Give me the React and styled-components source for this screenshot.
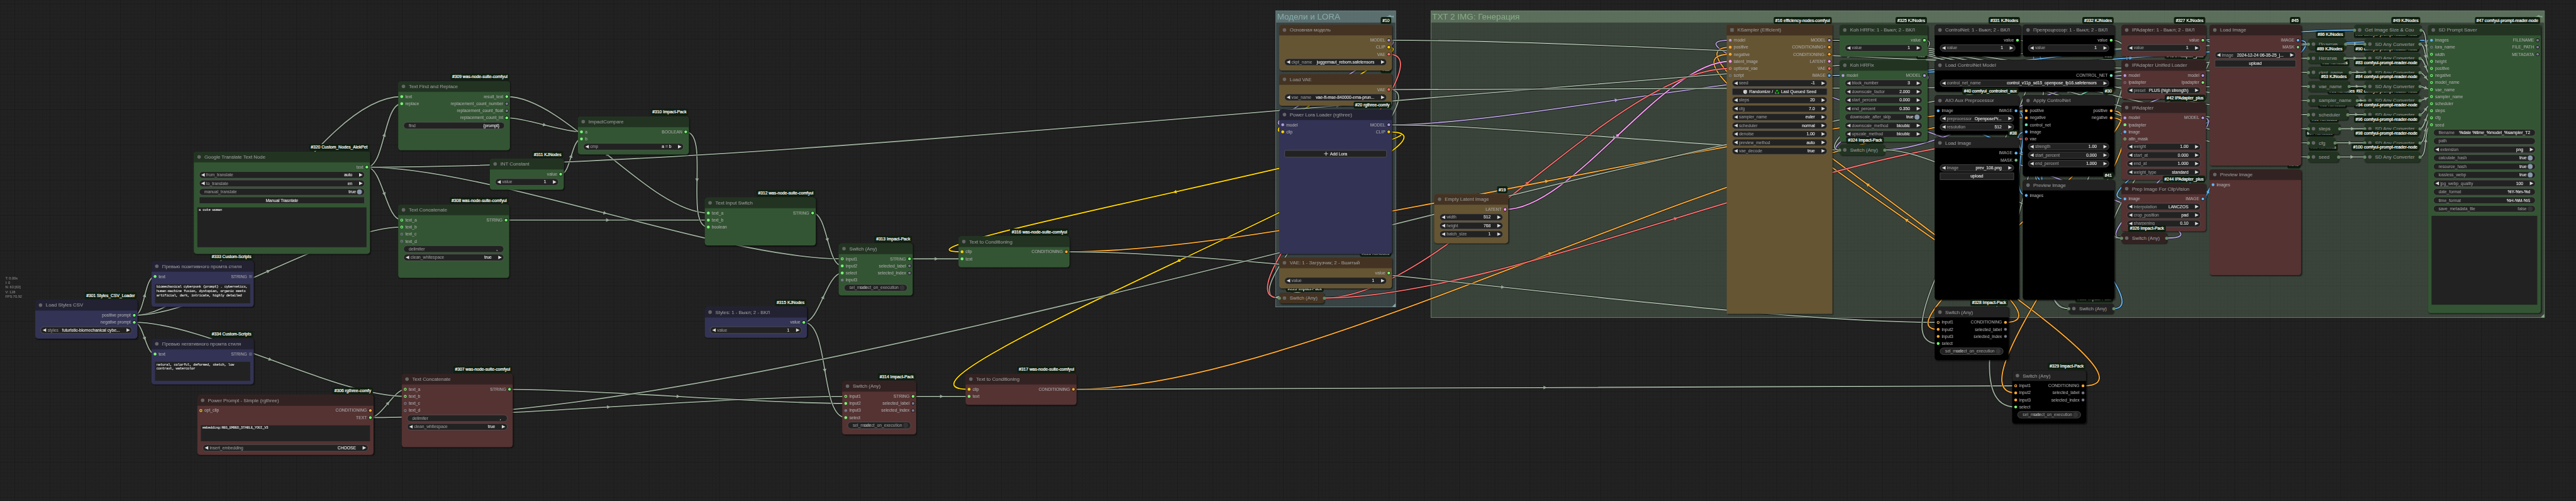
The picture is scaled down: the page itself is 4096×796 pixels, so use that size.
import React from 'react';
import styled, { createGlobalStyle, css } from 'styled-components';

const GlobalStyle = createGlobalStyle`
  html, body { margin: 0; padding: 0; background: #222; overflow: hidden; }
  * { box-sizing: border-box; }
`;

const GREY = '#778';
const LINK = '#9a9';
const ON = '#7f7';
const MODEL = '#b39ddb';
const CLIP = '#ffd500';
const VAE = '#ff6e6e';
const COND = '#ffa931';
const IMAGE = '#64b5f6';
const LATENT = '#ff9cf9';
const CNET = '#6ee7b7';
const MASK = '#81c784';

const palettes = {
  green: { title: '#232', body: '#353' },
  red: { title: '#322', body: '#533' },
  blue: { title: '#223', body: '#335' },
  gold: { title: '#432', body: '#653' },
  black: { title: '#222', body: '#000' },
};

/* ---------- canvas ---------- */

const Viewport = styled.div`
  width: 4096px;
  height: 796px;
  overflow: hidden;
  background: #222;
`;

const Canvas = styled.main`
  position: relative;
  width: 7310px;
  height: 1421px;
  transform: scale(0.56033);
  transform-origin: 0 0;
  font-family: 'Liberation Sans', Arial, sans-serif;
  font-size: 12px;
  line-height: 20px;
  white-space: pre;
  -webkit-text-stroke: 0.15px;
`;

const Layer = styled.svg`
  position: absolute;
  left: 0;
  top: 0;
  width: 7310px;
  height: 1421px;
  display: block;
`;

const Stats = styled.div`
  position: absolute;
  left: 15px;
  top: 782px;
  color: #888;
  font-size: 10px;
  line-height: 13px;
`;

/* ---------- groups ---------- */

const GroupBox = styled.section`
  position: absolute;
  left: ${(p) => p.$x}px;
  top: ${(p) => p.$y}px;
  width: ${(p) => p.$w}px;
  height: ${(p) => p.$h}px;
  border: 1px solid rgb(${(p) => p.$rgb});
  background: rgba(${(p) => p.$rgb}, 0.25);
`;

const GroupHeader = styled.header`
  display: flex;
  justify-content: space-between;
  align-items: center;
  height: 33px;
  padding: 0 5px 2px 3px;
  background: rgba(${(p) => p.$rgb}, 0.43);
  color: rgb(${(p) => p.$rgb});
  font-size: 24px;
  line-height: 32px;
`;

const GroupCorner = styled.i`
  position: absolute;
  right: 0;
  bottom: 0;
  border: 5px solid transparent;
  border-right-color: rgb(${(p) => p.$rgb});
  border-bottom-color: rgb(${(p) => p.$rgb});
`;

/* ---------- nodes ---------- */

const NodeBox = styled.article`
  position: absolute;
  left: ${(p) => p.$x}px;
  top: ${(p) => p.$y - 30}px;
  width: ${(p) => p.$w}px;
  height: ${(p) => p.$h + 30}px;
  border-radius: ${(p) => (p.$square ? 0 : 8)}px;
  background: ${(p) => (p.$folded ? palettes[p.$tone].title : palettes[p.$tone].body)};
  box-shadow: 2px 2px 3px rgba(0, 0, 0, 0.5);
`;

const TitleBar = styled.header`
  display: flex;
  align-items: center;
  height: 30px;
  padding-left: 10px;
  gap: 10px;
  border-radius: ${(p) => (p.$square ? '0' : p.$folded ? '8px' : '8px 8px 0 0')};
  background: ${(p) => palettes[p.$tone].title};
  ${(p) => !p.$folded && css`box-shadow: 0 1px 0 rgba(0, 0, 0, 0.2);`}
  color: #999;
  font-size: 14px;
`;

const TitleDot = styled.i`
  width: 10px;
  height: 10px;
  background: #666;
  border-radius: ${(p) => (p.$square ? 0 : '50%')};
`;

const Badge = styled.span`
  position: absolute;
  right: 2px;
  top: -22px;
  height: 20px;
  padding: 0 5px;
  border-radius: 5px;
  background: #0f1f0f;
  color: #fff;
  -webkit-text-stroke: 0.4px #fff;
`;

const FoldPin = styled.i`
  position: absolute;
  top: 10.5px;
  ${(p) => p.$side}: -4.5px;
  width: 9px;
  height: 9px;
  border-radius: 50%;
  background: #686;
`;

const Slots = styled.div`
  display: flex;
  justify-content: space-between;
  padding: 4px 5px 2px 6px;
  color: #aaa;
`;

const SlotColumn = styled.div`
  display: flex;
  flex-direction: column;
  align-items: ${(p) => (p.$out ? 'flex-end' : 'flex-start')};
`;

const Slot = styled.div`
  display: flex;
  align-items: center;
  height: 20px;
  gap: 6px;
`;

const Pin = styled.i`
  width: 8px;
  height: 8px;
  border-radius: 50%;
  background: ${(p) => p.$c};
  ${(p) => p.$ring && css`background: transparent; border: 2.6px solid ${p.$c};`}
  ${(p) => p.$out && css`box-shadow: 0 0 0 1px #000;`}
`;

const ListPin = styled.i`
  display: grid;
  grid-template-columns: repeat(3, 2px);
  gap: 1px;
  width: 8px;

  b {
    height: 2px;
    background: #889;
  }
`;

const Pill = styled.div`
  display: flex;
  align-items: center;
  height: 20px;
  margin: ${(p) => p.$mt || 0}px 15px 4px;
  padding: 0 ${(p) => (p.$kind === 'toggle' ? 6.8 : p.$kind === 'text' ? 14 : 5)}px 0 ${(p) => (p.$kind === 'step' ? 5 : 14)}px;
  border: 1px solid #666;
  border-radius: 10px;
  background: #222;
  line-height: 18px;
`;

const Label = styled.span`
  flex: 0 1 auto;
  min-width: 0;
  color: #999;
  ${(p) => p.$step && css`margin-left: 4px;`}
`;

const Value = styled.span`
  flex: none;
  margin-left: auto;
  color: ${(p) => (p.$off ? '#999' : '#ddd')};
  -webkit-text-stroke: ${(p) => (p.$off ? 0.15 : 0.35)}px;
  margin-right: ${(p) => (p.$kind === 'step' ? 19 : p.$kind === 'toggle' ? 2.8 : 0)}px;
`;

const Arrow = styled.i`
  flex: none;
  border: 5px solid transparent;
  ${(p) => (p.$right ? css`border-right: 0; border-left: 10px solid #ddd;` : css`border-left: 0; border-right: 10px solid #ddd;`)}
`;

const Knob = styled.i`
  flex: none;
  width: 14.4px;
  height: 14.4px;
  border-radius: 50%;
  background: ${(p) => (p.$off ? '#333' : '#89a')};
`;

const Button = styled.div`
  display: flex;
  justify-content: center;
  align-items: center;
  gap: 5px;
  height: 20px;
  margin: ${(p) => p.$mt || 0}px 15px 4px;
  border: 1px solid #666;
  border-radius: ${(p) => p.$r || 0}px;
  background: #222;
  color: #ddd;
  line-height: 18px;
  -webkit-text-stroke: 0.35px;
`;

const TextArea = styled.div`
  height: ${(p) => p.$h}px;
  margin: 10px 10px 0;
  padding: 2px 4px;
  background: #222;
  color: #ddd;
  font: 10px/12px 'Liberation Mono', monospace;
  letter-spacing: -0.5px;
  -webkit-text-stroke: 0.3px;
  overflow: hidden;
`;

/* ---------- small drawings ---------- */

const PushPin = ({ rgb }) => (
  <svg width="20" height="12" viewBox="0 0 20 12">
    <g fill={`rgb(${rgb})`}>
      <rect x="0" y="5.3" width="6" height="1.4" />
      <path d="M4.5 5.3 Q6 2 8.5 2 Q11.5 2 13 4.6 L17.6 5 L18 3 H19.6 V9 H18 L17.6 7 H4.5 Z" />
    </g>
  </svg>
);

const Dice = () => (
  <svg width="13" height="13" viewBox="0 0 13 13">
    <path d="M6.5 0.5 L12 3 L11.3 9.6 L6.5 12.6 L1.7 9.6 L1 3 Z" fill="#e8e8e8" />
    <path d="M6.5 5.6 L12 3 L11.3 9.6 L6.5 12.6 Z" fill="#bdbdbd" />
    <g fill="#444">
      <circle cx="6.5" cy="3" r="0.9" />
      <circle cx="3.2" cy="6" r="0.7" />
      <circle cx="4.8" cy="9.2" r="0.7" />
      <circle cx="8.3" cy="8.6" r="0.7" />
      <circle cx="10" cy="6" r="0.7" />
    </g>
  </svg>
);

const Recycle = () => (
  <svg width="13" height="13" viewBox="0 0 13 13" fill="none" stroke="#16c016" strokeWidth="2.6">
    <path d="M4 5.5 L6 2 H7.5 L9.2 5" />
    <path d="M10 6.8 L11.4 9.6 L10.6 11 H7.4" />
    <path d="M5.4 11 H2.4 L1.6 9.6 L3 7" />
  </svg>
);

/* ---------- node data ---------- */

const step = (label, value, mt) => ({ kind: 'step', label, value, mt });
const text = (label, value) => ({ kind: 'text', label, value });
const toggle = (label, value, off) => ({ kind: 'toggle', label, value, off });
const button = (value, extra = {}) => ({ kind: 'button', value, ...extra });
const area = (value, h) => ({ kind: 'area', value, h });
const ring = (name, c = ON) => [name, c, 'ring'];

const NODE = (id, title, tone, x, y, w, h, badge, inputs = [], outputs = [], widgets = [], square = false) => ({
  id, title, tone, x, y, w, h, badge, inputs, outputs, widgets, square,
});
const FOLD = (id, title, tone, x, y, w, badge) => ({ id, title, tone, x, y, w, h: 0, badge, folded: true });

const concatIn = [ring('text_a'), ring('text_b'), ring('text_c', GREY), ring('text_d', GREY)];
const concatWidgets = [text('delimiter', ', '), step('clean_whitespace', 'true')];
const switchOut = (name, c) => [[name, c], ['selected_label', GREY], ['selected_index', GREY]];
const selMode = [toggle('sel_mode', 'select_on_execution', true)];
const valueOut = [['value', ON]];
const valueOne = [step('value', '1')];
const reader = 'comfyui-prompt-reader-node';

const nodes = [
  NODE('301', 'Load Styles CSV', 'blue', 100, 880, 290, 80, '#301 Styles_CSV_Loader', [],
    [['positive prompt', ON], ['negative prompt', ON]], [step('styles', 'futuristic-biomechanical cybe...')]),
  NODE('333', 'Превью позитивного промта стиля', 'blue', 430, 770, 290, 100, '#333 Custom-Scripts',
    [['text', ON]], [['STRING', GREY, 'list']],
    [area('biomechanical cyberpunk {prompt} . cybernetics,\nhuman-machine fusion, dystopian, organic meets\nartificial, dark, intricate, highly detailed', 54)]),
  NODE('334', 'Превью негативного промта стиля', 'blue', 430, 990, 290, 100, '#334 Custom-Scripts',
    [['text', ON]], [['STRING', GREY, 'list']],
    [area('natural, colorful, deformed, sketch, low\ncontrast, watercolor', 54)]),
  NODE('306', 'Power Prompt - Simple (rgthree)', 'red', 560, 1150, 500, 140, '#306 rgthree-comfy',
    [ring('opt_clip', CLIP)], [['CONDITIONING', COND], ['TEXT', ON]],
    [area('embedding:NEG_EMBED_STABLE_YOGI_V3', 45), step('insert_embedding', 'CHOOSE', 9)]),
  NODE('320', 'Google Translate Text Node', 'green', 550, 460, 500, 260, '#320 Custom_Nodes_AlekPet', [],
    [['text', ON]],
    [step('from_translate', 'auto'), step('to_translate', 'en'), toggle('manual_translate', 'true'),
      button('Manual Trasnlate'), area('a cute woman', 113)]),
  NODE('309', 'Text Find and Replace', 'green', 1130, 260, 317, 166, '#309 was-node-suite-comfyui',
    [['text', ON], ['replace', ON]],
    [['result_text', ON], ['replacement_count_number', GREY], ['replacement_count_float', GREY], ['replacement_count_int', ON]],
    [text('find', '{prompt}')]),
  NODE('308', 'Text Concatenate', 'green', 1130, 610, 315, 178, '#308 was-node-suite-comfyui', concatIn, [['STRING', ON]], concatWidgets),
  NODE('307', 'Text Concatenate', 'red', 1140, 1090, 315, 178, '#307 was-node-suite-comfyui', concatIn, [['STRING', ON]], concatWidgets),
  NODE('311', 'INT Constant', 'green', 1390, 480, 210, 58, '#311 KJNodes', [], valueOut, valueOne),
  NODE('310', 'ImpactCompare', 'green', 1640, 360, 315, 78, '#310 Impact-Pack', [['a', ON], ['b', ON]], [['BOOLEAN', ON]], [step('cmp', 'a = b')]),
  NODE('312', 'Text Input Switch', 'green', 2000, 590, 315, 106, '#312 was-node-suite-comfyui',
    [['text_a', ON], ['text_b', ON], ['boolean', ON]], [['STRING', ON]]),
  NODE('313', 'Switch (Any)', 'green', 2380, 720, 210, 118, '#313 Impact-Pack',
    [ring('input1'), ['input2', ON], ['select', ON], ['input3', GREY]], switchOut('STRING', ON), selMode),
  NODE('315', 'Styles: 1 - Выкл; 2 - ВКЛ', 'blue', 2000, 900, 290, 58, '#315 KJNodes', [], valueOut, valueOne),
  NODE('316', 'Text to Conditioning', 'green', 2720, 700, 315, 58, '#316 was-node-suite-comfyui', [['clip', CLIP], ['text', ON]], [['CONDITIONING', COND]]),
  NODE('314', 'Switch (Any)', 'red', 2390, 1110, 210, 122, '#314 Impact-Pack',
    [ring('input1'), ['input2', ON], ['input3', GREY], ['select', ON]], switchOut('STRING', ON), selMode),
  NODE('317', 'Text to Conditioning', 'red', 2740, 1090, 315, 58, '#317 was-node-suite-comfyui', [['clip', CLIP], ['text', ON]], [['CONDITIONING', COND]]),

  FOLD('225', 'Switch (Any)', 'gold', 3630, 860, 128, '#225 Impact-Pack'),
  NODE('226', 'VAE: 1 - Загрузчик; 2 - Вшитый', 'gold', 3630, 760, 320, 58, '#226 KJNodes', [], valueOut, valueOne),
  NODE('12', 'Load VAE', 'gold', 3630, 240, 320, 60, '#12', [], [['VAE', VAE]], [step('vae_name', 'vae-ft-mse-840000-ema-prun...')]),
  NODE('10', 'Основная модель', 'gold', 3630, 100, 320, 100, '#10', [],
    [['MODEL', MODEL], ['CLIP', CLIP], ['VAE', VAE]], [step('ckpt_name', 'juggernaut_reborn.safetensors')]),
  NODE('20', 'Power Lora Loader (rgthree)', 'blue', 3630, 340, 320, 380, '#20 rgthree-comfy',
    [['model', MODEL], ['clip', CLIP]], [['MODEL', MODEL], ['CLIP', CLIP]], [button('Add Lora', { mt: 40, r: 4, plus: true })]),
  NODE('19', 'Empty Latent Image', 'gold', 4070, 580, 210, 110, '#19', [], [['LATENT', LATENT]],
    [step('width', '512'), step('height', '768'), step('batch_size', '1')]),
  NODE('16', 'KSampler (Efficient)', 'gold', 4900, 100, 300, 790, '#16 efficiency-nodes-comfyui',
    [['model', MODEL], ['positive', COND], ['negative', COND], ['latent_image', LATENT], ring('optional_vae', VAE), ring('script', GREY)],
    [['MODEL', MODEL], ['CONDITIONING+', COND], ['CONDITIONING-', COND], ['LATENT', LATENT], ['VAE', VAE], ['IMAGE', IMAGE]],
    [step('seed', '-1'), button('seed', { seed: true }), step('steps', '20'), step('cfg', '7.0'), step('sampler_name', 'euler'),
      step('scheduler', 'normal'), step('denoise', '1.00'), step('preview_method', 'auto'), step('vae_decode', 'true')], true),
  NODE('22', 'Koh HRFix', 'green', 5220, 200, 250, 202, '#22', [['model', MODEL]], [['MODEL', MODEL]],
    [step('block_number', '3'), step('downscale_factor', '2.000'), step('start_percent', '0.000'), step('end_percent', '0.350'),
      toggle('downscale_after_skip', 'true'), step('downscale_method', 'bicubic'), step('upscale_method', 'bicubic')]),
  NODE('325', 'Koh HRFix: 1 - Выкл; 2 - ВКЛ', 'green', 5220, 100, 250, 60, '#325 KJNodes', [], valueOut, valueOne),
  FOLD('324', 'Switch (Any)', 'green', 5220, 440, 128, '#324 Impact-Pack'),

  NODE('31', 'Load ControlNet Model', 'black', 5490, 200, 510, 60, '#31', [], [['CONTROL_NET', CNET]],
    [step('control_net_name', 'control_v11p_sd15_openpose_fp16.safetensors')]),
  NODE('331', 'ControlNet: 1 - Выкл; 2 - ВКЛ', 'black', 5490, 100, 244, 60, '#331 KJNodes', [], valueOut, valueOne),
  NODE('332', 'Препроцессор: 1 - Выкл; 2 - ВКЛ', 'black', 5740, 100, 260, 60, '#332 KJNodes', [], valueOut, valueOne),
  NODE('40', 'AIO Aux Preprocessor', 'black', 5490, 300, 240, 82, '#40 comfyui_controlnet_aux', [['image', IMAGE]], [['IMAGE', IMAGE]],
    [step('preprocessor', 'OpenposePr...'), step('resolution', '512')]),
  NODE('30', 'Apply ControlNet', 'black', 5740, 300, 260, 200, '#30',
    [['positive', COND], ['negative', COND], ['control_net', CNET], ['image', IMAGE], ring('vae', VAE)],
    [['positive', COND], ['negative', COND]], [step('strength', '1.00'), step('start_percent', '0.000'), step('end_percent', '1.000')]),
  NODE('38', 'Load Image', 'black', 5490, 420, 240, 430, '#38', [], [['IMAGE', IMAGE], ['MASK', MASK]], [step('image', 'prev_108.png'), button('upload')]),
  FOLD('330', 'Switch (Any)', 'black', 5870, 890, 128, '#330 Impact-Pack'),
  NODE('41', 'Preview Image', 'black', 5740, 540, 260, 310, '#41', [['images', IMAGE]]),
  NODE('328', 'Switch (Any)', 'black', 5490, 900, 210, 121, '#328 Impact-Pack',
    [ring('input1', COND), ['input2', COND], ['input3', COND], ['select', ON]], switchOut('CONDITIONING', COND), selMode),
  NODE('329', 'Switch (Any)', 'black', 5710, 1080, 210, 121, '#329 Impact-Pack',
    [ring('input1', COND), ['input2', COND], ['input3', COND], ['select', ON]], switchOut('CONDITIONING', COND), selMode),

  NODE('43', 'IPAdapter Unified Loader', 'red', 6020, 200, 240, 80, '#43 IPAdapter_plus',
    [['model', MODEL], ring('ipadapter', GREY)], [['model', MODEL], ['ipadapter', ON]], [step('preset', 'PLUS (high strength)')]),
  NODE('327', 'IPAdapter: 1 - Выкл; 2 - ВКЛ', 'red', 6020, 100, 240, 60, '#327 KJNodes', [], valueOut, valueOne),
  NODE('42', 'IPAdapter', 'red', 6020, 320, 240, 190, '#42 IPAdapter_plus',
    [['model', MODEL], ['ipadapter', ON], ['image', IMAGE], ring('attn_mask', MASK)], [['MODEL', MODEL]],
    [step('weight', '1.00'), step('start_at', '0.000'), step('end_at', '1.000'), step('weight_type', 'standard')]),
  NODE('244', 'Prep Image For ClipVision', 'red', 6020, 550, 240, 106, '#244 IPAdapter_plus', [['image', IMAGE]], [['IMAGE', IMAGE]],
    [step('interpolation', 'LANCZOS'), step('crop_position', 'pad'), step('sharpening', '0.10')]),
  FOLD('326', 'Switch (Any)', 'red', 6020, 690, 128, '#326 Impact-Pack'),
  NODE('245', 'Preview Image', 'red', 6270, 510, 260, 270, '#245', [['images', IMAGE]]),
  NODE('45', 'Load Image', 'red', 6270, 100, 260, 370, '#45', [], [['IMAGE', IMAGE], ['MASK', MASK]],
    [step('image', '2024-12-24 06-35-25_j...'), button('upload')]),

  FOLD('99', 'seed', 'green', 6550, 460, 86, '#99 KJNodes'),
  FOLD('97', 'cfg', 'green', 6550, 420, 76, '#97 KJNodes'),
  FOLD('95', 'steps', 'green', 6550, 380, 89, '#95 KJNodes'),
  FOLD('93', 'scheduler', 'green', 6550, 340, 112, '#93 KJNodes'),
  FOLD('92', 'SD Any Converter', 'green', 6710, 300, 157, `#92 ${reader}`),
  FOLD('94', 'SD Any Converter', 'green', 6710, 340, 157, `#94 ${reader}`),
  FOLD('91', 'sampler_name', 'green', 6550, 300, 139, '#91 KJNodes'),
  FOLD('96', 'SD Any Converter', 'green', 6710, 380, 157, `#96 ${reader}`),
  FOLD('98', 'SD Any Converter', 'green', 6710, 420, 157, `#98 ${reader}`),
  FOLD('100', 'SD Any Converter', 'green', 6710, 460, 157, `#100 ${reader}`),
  FOLD('90', 'SD Any Converter', 'green', 6710, 180, 157, `#90 ${reader}`),
  FOLD('88', 'SD Any Converter', 'green', 6710, 140, 157, `#88 ${reader}`),
  FOLD('83', 'SD Any Converter', 'green', 6710, 220, 157, `#83 ${reader}`),
  FOLD('84', 'SD Any Converter', 'green', 6710, 260, 157, `#84 ${reader}`),
  FOLD('82', 'ckpt_name', 'green', 6550, 220, 119, '#82 KJNodes'),
  FOLD('63', 'vae_name', 'green', 6550, 260, 116, '#63 KJNodes'),
  FOLD('86', 'Позитив', 'green', 6550, 140, 106, '#86 KJNodes'),
  FOLD('89', 'Негатив', 'green', 6550, 180, 104, '#89 KJNodes'),
  FOLD('49', 'Get Image Size & Cou', 'green', 6681, 100, 189, '#49 KJNodes'),
  NODE('47', 'SD Prompt Saver', 'green', 6890, 100, 320, 788, `#47 ${reader}`,
    [['images', IMAGE], ring('lora_name', GREY), ring('width'), ring('height'), ring('positive'), ring('negative'), ring('model_name'),
      ring('vae_name'), ring('sampler_name'), ring('scheduler'), ring('steps'), ring('cfg'), ring('seed')],
    [['FILENAME', GREY], ['FILE_PATH', GREY], ['METADATA', GREY]],
    [text('filename', '%date %time_%model_%sampler_T2'), text('path', ''), step('extension', 'png'), toggle('calculate_hash', 'true'),
      toggle('resource_hash', 'true'), toggle('lossless_webp', 'true'), step('jpg_webp_quality', '100'), text('date_format', '%Y-%m-%d'),
      text('time_format', '%H-%M-%S'), toggle('save_metadata_file', 'false', true), area('', 252)]),
];

const byId = Object.fromEntries(nodes.map((n) => [n.id, n]));

/* [from node, output index, to node, input index, colour] */
const links = [
  ['301', 0, '333', 0], ['301', 1, '334', 0], ['301', 0, '309', 0], ['320', 0, '309', 1],
  ['320', 0, '308', 0], ['301', 0, '308', 1], ['306', 1, '307', 0], ['301', 1, '307', 1],
  ['309', 3, '310', 0], ['311', 0, '310', 1], ['309', 0, '312', 0], ['308', 0, '312', 1], ['310', 0, '312', 2],
  ['320', 0, '313', 0], ['312', 0, '313', 1], ['315', 0, '313', 2],
  ['306', 1, '314', 0], ['307', 0, '314', 1], ['315', 0, '314', 3],
  ['313', 0, '316', 1], ['314', 0, '317', 1],
  ['20', 1, '316', 0, CLIP], ['20', 1, '317', 0, CLIP],
  ['10', 0, '20', 0, MODEL], ['10', 1, '20', 1, CLIP],
  ['12', 0, '225', 0], ['10', 2, '225', 0, VAE], ['226', 0, '225', 0],
  ['20', 0, '22', 0, MODEL], ['326', 0, '16', 0, MODEL],
  ['328', 0, '16', 1, COND], ['329', 0, '16', 2, COND],
  ['19', 0, '16', 3, LATENT], ['225', 0, '16', 4, VAE],
  ['22', 0, '324', 0, MODEL], ['20', 0, '324', 0], ['325', 0, '324', 0],
  ['316', 0, '30', 0, COND], ['317', 0, '30', 1, COND], ['31', 0, '30', 2, CNET], ['330', 0, '30', 3, IMAGE], ['225', 0, '30', 4, VAE],
  ['38', 0, '40', 0, IMAGE], ['40', 0, '41', 0, IMAGE],
  ['40', 0, '330', 0, IMAGE], ['38', 0, '330', 0], ['332', 0, '330', 0],
  ['316', 0, '328', 0], ['30', 0, '328', 1, COND], ['331', 0, '328', 3],
  ['317', 0, '329', 0], ['30', 1, '329', 1, COND], ['331', 0, '329', 3],
  ['324', 0, '43', 0, MODEL], ['43', 0, '42', 0, MODEL], ['43', 1, '42', 1], ['244', 0, '42', 2, IMAGE],
  ['45', 0, '244', 0, IMAGE], ['244', 0, '245', 0, IMAGE],
  ['42', 0, '326', 0, MODEL], ['324', 0, '326', 0], ['327', 0, '326', 0],
  ['16', 5, '49', 0, IMAGE], ['16', 5, '47', 0, IMAGE],
  ['320', 0, '86', 0], ['306', 1, '89', 0], ['10', 0, '82', 0], ['12', 0, '63', 0],
  ['16', 0, '91', 0], ['16', 0, '93', 0], ['16', 0, '95', 0], ['16', 0, '97', 0], ['16', 0, '99', 0],
  ['86', 0, '88', 0], ['89', 0, '90', 0], ['82', 0, '83', 0], ['63', 0, '84', 0], ['91', 0, '92', 0],
  ['93', 0, '94', 0], ['95', 0, '96', 0], ['97', 0, '98', 0], ['99', 0, '100', 0],
  ['49', 0, '47', 2], ['49', 0, '47', 3], ['88', 0, '47', 4], ['90', 0, '47', 5], ['83', 0, '47', 6], ['84', 0, '47', 7],
  ['92', 0, '47', 8], ['94', 0, '47', 9], ['96', 0, '47', 10], ['98', 0, '47', 11], ['100', 0, '47', 12],
];

/* ---------- links ---------- */

const outPos = (n, i) => (n.folded ? [n.x + n.w, n.y - 15] : [n.x + n.w - 9, n.y + 14 + 20 * i]);
const inPos = (n, i) => (n.folded ? [n.x, n.y - 15] : [n.x + 10, n.y + 14 + 20 * i]);

function Link({ link }) {
  const [from, oi, to, ii, color = LINK] = link;
  const [ax, ay] = outPos(byId[from], oi);
  const [bx, by] = inPos(byId[to], ii);
  const pull = Math.hypot(bx - ax, by - ay) * 0.25;
  const d = `M${ax} ${ay}C${ax + pull} ${ay} ${bx - pull} ${by} ${bx} ${by}`;
  const tx = bx - ax - pull;
  const ty = by - ay;
  const angle = (Math.atan2(ty, tx) * 180) / Math.PI;
  return (
    <g>
      <path d={d} fill="none" stroke="rgba(0,0,0,0.5)" strokeWidth="6.6" />
      <path d={d} fill="none" stroke={color} strokeWidth="3.3" />
      <path d="M-3 -5 L7 0 L-3 5 Z" fill={color} transform={`translate(${(ax + bx) / 2} ${(ay + by) / 2}) rotate(${angle})`} />
    </g>
  );
}

function Grid() {
  return (
    <Layer>
      <defs>
        <pattern id="cells" x="41" y="10" width="100" height="100" patternUnits="userSpaceOnUse">
          {[10, 20, 30, 40, 50, 60, 70, 80, 90].map((k) => (
            <path key={k} d={`M${k + 0.5} 0V100M0 ${k + 0.5}H100`} stroke="#1d1d1d" strokeWidth="1" />
          ))}
          <path d="M0.5 0V100M0 0.5H100" stroke="#181818" strokeWidth="1.6" />
        </pattern>
      </defs>
      <rect width="7310" height="1421" fill="url(#cells)" />
    </Layer>
  );
}

function Widget({ w }) {
  if (w.kind === 'area') return <TextArea $h={w.h}>{w.value}</TextArea>;
  if (w.kind === 'button') {
    if (w.seed) {
      return (
        <Button><Dice /><span>Randomize /</span><Recycle /><span>Last Queued Seed</span></Button>
      );
    }
    return (
      <Button $mt={w.mt} $r={w.r}>
        {w.plus && (
          <svg width="12" height="12" viewBox="0 0 12 12" stroke="#ccc" strokeWidth="1.8"><path d="M6 0V12M0 6H12" /></svg>
        )}
        <span>{w.value}</span>
      </Button>
    );
  }
  const stepper = w.kind === 'step';
  return (
    <Pill $kind={w.kind} $mt={w.mt}>
      {stepper && <Arrow />}
      <Label $step={stepper}>{w.label}</Label>
      <Value $kind={w.kind} $off={w.off}>{w.value}</Value>
      {stepper && <Arrow $right />}
      {w.kind === 'toggle' && <Knob $off={w.off} />}
    </Pill>
  );
}

function Node({ n }) {
  return (
    <NodeBox $x={n.x} $y={n.y} $w={n.w} $h={n.h} $tone={n.tone} $square={n.square} $folded={n.folded}>
      <TitleBar $tone={n.tone} $square={n.square} $folded={n.folded}>
        <TitleDot $square={n.square} />
        {n.title}
      </TitleBar>
      {n.folded ? (
        <>
          <FoldPin $side="left" />
          <FoldPin $side="right" />
        </>
      ) : (
        <>
          <Slots>
            <SlotColumn>
              {n.inputs.map(([name, c, mode]) => (
                <Slot key={name}><Pin $c={c} $ring={mode === 'ring'} />{name}</Slot>
              ))}
            </SlotColumn>
            <SlotColumn $out>
              {n.outputs.map(([name, c, mode]) => (
                <Slot key={name}>
                  {name}
                  {mode === 'list' ? <ListPin>{[...Array(9)].map((_, i) => <b key={i} />)}</ListPin> : <Pin $c={c} $out />}
                </Slot>
              ))}
            </SlotColumn>
          </Slots>
          {n.widgets.map((w, i) => <Widget key={i} w={w} />)}
        </>
      )}
      <Badge>{n.badge}</Badge>
    </NodeBox>
  );
}

function Group({ title, rgb, x, y, w, h }) {
  return (
    <GroupBox $x={x} $y={y} $w={w} $h={h} $rgb={rgb}>
      <GroupHeader $rgb={rgb}>
        <span>{title}</span>
        <PushPin rgb={rgb} />
      </GroupHeader>
      <GroupCorner $rgb={rgb} />
    </GroupBox>
  );
}

export default function App() {
  return (
    <Viewport>
      <GlobalStyle />
      <Canvas>
        <Grid />
        <Group title="Модели и LORA" rgb="136, 170, 170" x={3620} y={30} w={341} h={841} />
        <Group title="TXT 2 IMG: Генерация" rgb="136, 170, 136" x={4060} y={30} w={3161} h={871} />
        <Layer>
          {links.map((l, i) => <Link key={i} link={l} />)}
        </Layer>
        {nodes.map((n) => <Node key={n.id} n={n} />)}
        <Stats>{'T: 0.00s\nI: 0\nN: 63 [63]\nV: 128\nFPS:70.92'}</Stats>
      </Canvas>
    </Viewport>
  );
}
